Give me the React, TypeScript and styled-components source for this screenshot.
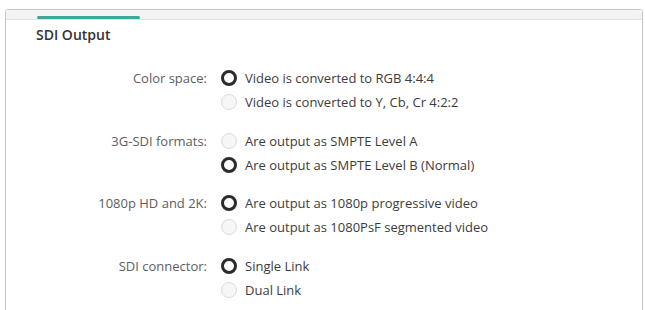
import React from "react";
import styled, { createGlobalStyle } from "styled-components";

const Global = createGlobalStyle`
  html, body { margin: 0; padding: 0; background: #ffffff; }
  body { font-family: "Open Sans", "Noto Sans", sans-serif; overflow: hidden; }
`;

const Page = styled.div`
  padding: 9px 2px 0 5px;
  height: 301px;
  overflow: hidden;
`;

const Panel = styled.section`
  border: 1px solid #c6c6c6;
  border-bottom: none;
  border-radius: 4px 4px 0 0;
  height: 320px;
  background: #ffffff;
  box-shadow: 0 0 1px rgba(0, 0, 0, 0.08);
`;

const TabStrip = styled.div`
  height: 9px;
  display: flex;
  align-items: flex-end;
  padding-left: 31px;
  background: #f3f3f3;
  border-bottom: 1px solid #e2e2e2;
`;

const TabIndicator = styled.div`
  width: 103px;
  height: 3px;
  border-radius: 2px;
  background: #3fa596;
`;

const Title = styled.h2`
  margin: 6px 0 0 30px;
  font-size: 14px;
  line-height: 18px;
  font-weight: 600;
  color: #333333;
`;

const Form = styled.div`
  margin-top: 22px;
  display: grid;
  grid-template-columns: 201px 1fr;
  column-gap: 14px;
  row-gap: 14.5px;
`;

const Label = styled.div`
  text-align: right;
  font-size: 13px;
  line-height: 24px;
  color: #5e5e5e;
`;

const Options = styled.div`
  display: flex;
  flex-direction: column;
`;

const Option = styled.label`
  display: flex;
  align-items: center;
  gap: 8px;
  height: 24px;
  font-size: 13px;
  color: #3c3c3c;
`;

const Radio = styled.span<{ $on: boolean }>`
  box-sizing: border-box;
  width: 16px;
  height: 16px;
  border-radius: 50%;
  border: ${(p) => (p.$on ? "3.5px solid #2b2b2b" : "1.5px solid #dcdcdc")};
  background: ${(p) => (p.$on ? "#ffffff" : "#f6f6f6")};
  flex-shrink: 0;
`;

const groups = [
  {
    label: "Color space:",
    options: ["Video is converted to RGB 4:4:4", "Video is converted to Y, Cb, Cr 4:2:2"],
    selected: 0,
  },
  {
    label: "3G-SDI formats:",
    options: ["Are output as SMPTE Level A", "Are output as SMPTE Level B (Normal)"],
    selected: 1,
  },
  {
    label: "1080p HD and 2K:",
    options: ["Are output as 1080p progressive video", "Are output as 1080PsF segmented video"],
    selected: 0,
  },
  {
    label: "SDI connector:",
    options: ["Single Link", "Dual Link"],
    selected: 0,
  },
];

export default function App() {
  return (
    <>
      <Global />
      <Page>
        <Panel>
          <TabStrip>
            <TabIndicator />
          </TabStrip>
          <Title>SDI Output</Title>
          <Form>
            {groups.map((g) => (
              <React.Fragment key={g.label}>
                <Label>{g.label}</Label>
                <Options>
                  {g.options.map((o, i) => (
                    <Option key={o}>
                      <Radio $on={i === g.selected} />
                      {o}
                    </Option>
                  ))}
                </Options>
              </React.Fragment>
            ))}
          </Form>
        </Panel>
      </Page>
    </>
  );
}
